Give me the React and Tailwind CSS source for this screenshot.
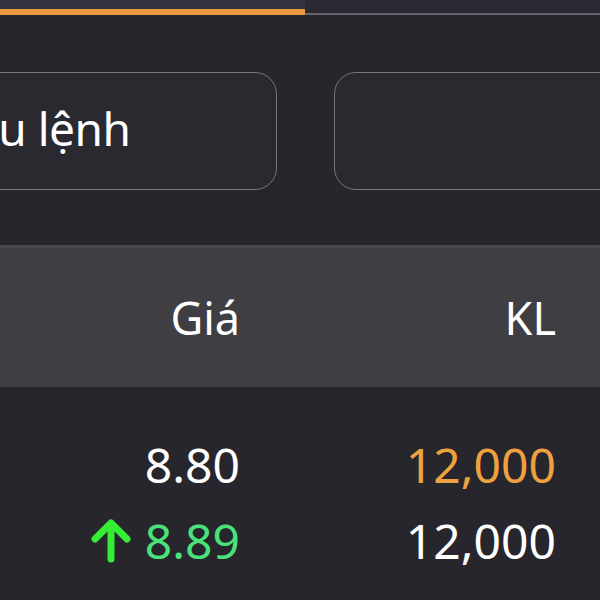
import { useState } from "react";

const rows = [
  { price: "8.80", vol: "12,000", priceColor: "text-white", volColor: "text-[#eea23f]", up: false },
  { price: "8.89", vol: "12,000", priceColor: "text-[#4ae27a]", volColor: "text-white", up: true },
];

function ArrowUp() {
  return (
    <svg width="40" height="44" viewBox="0 0 40 44" fill="none" className="mr-[14px]">
      <path d="M20 40V5M4 20L20 4l16 16" stroke="#33ee33" strokeWidth="7" strokeLinecap="round" strokeLinejoin="round" />
    </svg>
  );
}

export default function App() {
  const [tab] = useState(0);

  return (
    <div className="w-[600px] h-[600px] overflow-hidden bg-[#27262d] font-['Noto_Sans',sans-serif] text-white">
      {/* tabs */}
      <div className="flex h-[15px]">
        <div className={`w-[305px] bg-[#33333f] border-b-[6px] ${tab === 0 ? "border-[#e89b3e]" : "border-transparent"}`} />
        <div className="flex-1 bg-[#2b2a33] border-b-2 border-[#66656c]" />
      </div>

      {/* order type selectors */}
      <div className="flex gap-[57px] mt-[57px]">
        <div className="-ml-[217px] w-[494px] h-[118px] shrink-0 rounded-[22px] border-[1.5px] border-[#77767c] bg-[#2a2930] flex items-center justify-center pl-[4px]">
          <span className="text-[46px] leading-none pb-[6px] tracking-[-0.5px]">Kiểu lệnh</span>
        </div>
        <div className="w-[400px] h-[118px] shrink-0 rounded-[22px] border-[1.5px] border-[#77767c] bg-[#2a2930]" />
      </div>

      {/* table header */}
      <div className="mt-[55px] h-[142px] bg-[#3e3e43] border-t-[3px] border-[#47464c] grid grid-cols-[240px_316px] items-center text-[45px] leading-none">
        <div className="text-right">Giá</div>
        <div className="text-right">KL</div>
      </div>

      {/* rows */}
      <div className="pt-[40px]">
        {rows.map((r, i) => (
          <div key={i} className="grid grid-cols-[240px_316px] items-center h-[76px] text-[48px] leading-none">
            <div className={`flex items-center justify-end ${r.priceColor}`}>
              {r.up && <ArrowUp />}
              <span>{r.price}</span>
            </div>
            <div className={`text-right ${r.volColor}`}>{r.vol}</div>
          </div>
        ))}
      </div>
    </div>
  );
}
